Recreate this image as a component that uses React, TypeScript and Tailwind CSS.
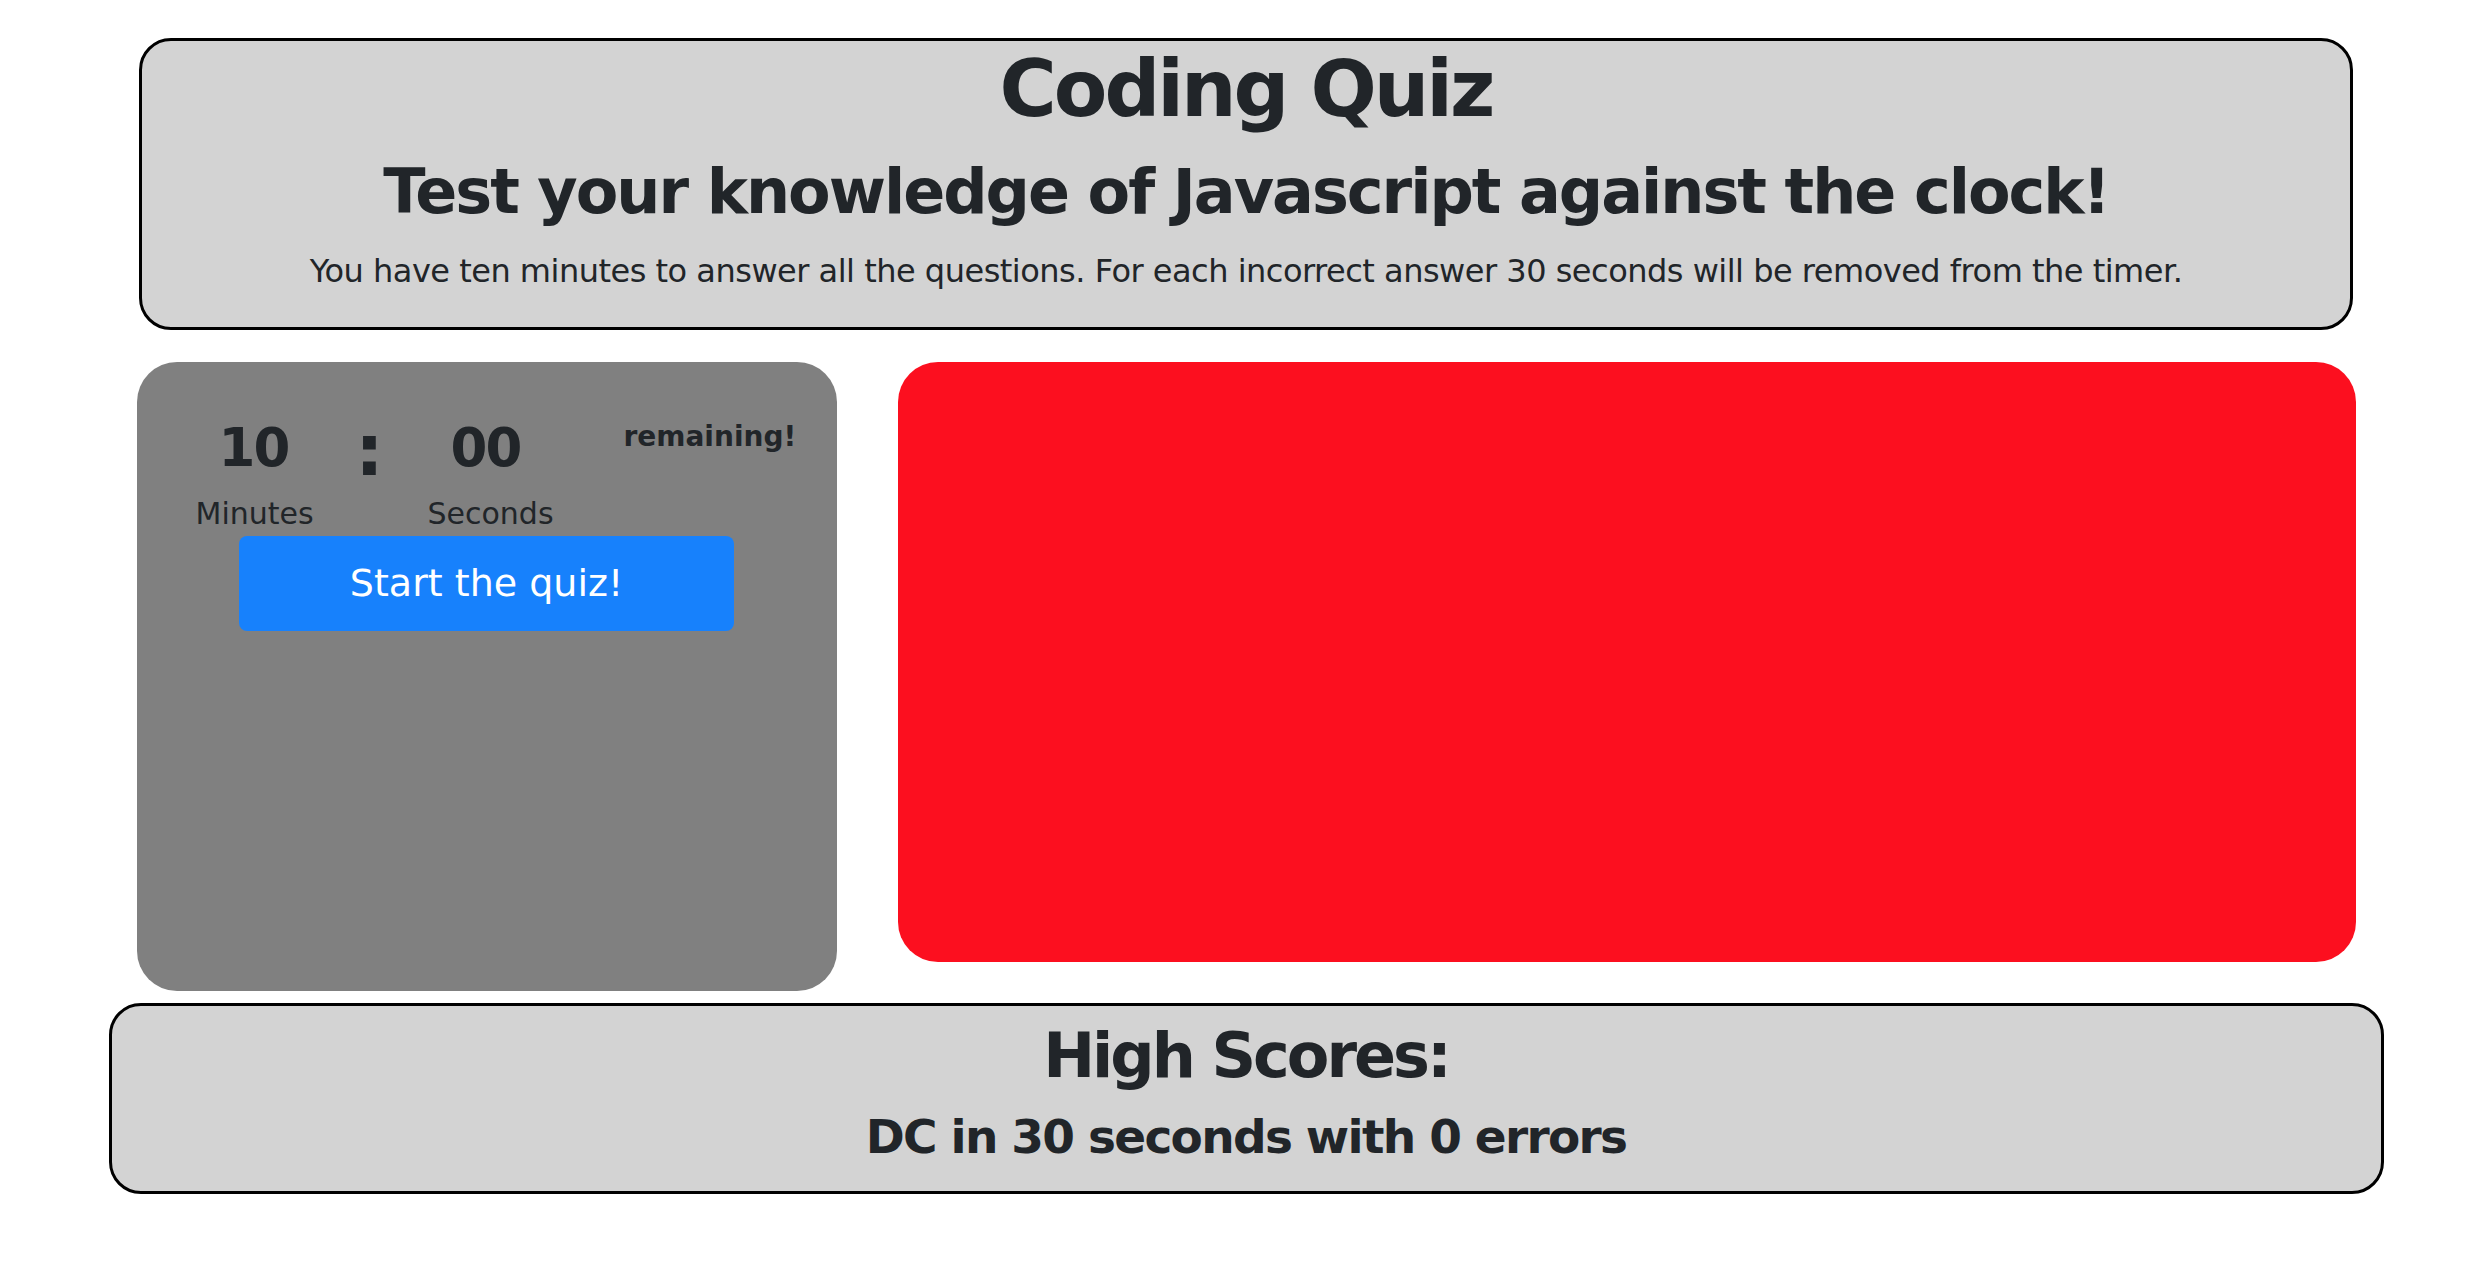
export default function App() {
  return (
    <div className="min-h-screen bg-white pt-[38px] font-['DejaVu_Sans',sans-serif] text-[#212529]">
      <header className="mx-auto w-[2214px] rounded-[32px] border-[3px] border-black bg-[#d3d3d3] pt-[1px] text-center">
        <h1 className="mb-[16px] text-[78px] font-bold leading-[1.23] tracking-[-3px]">Coding Quiz</h1>
        <h2 className="mb-[16px] text-[62px] font-bold leading-[1.24] tracking-[-2px]">
          Test your knowledge of Javascript against the clock!
        </h2>
        <p className="mb-[32px] text-[32px] leading-[1.5] tracking-[-0.5px]">
          You have ten minutes to answer all the questions. For each incorrect answer 30 seconds will be removed from the timer.
        </p>
      </header>

      <main className="mx-auto mt-[32px] flex w-[2219px] items-start justify-between">
        <section className="h-[629px] w-[700px] rounded-[40px] bg-[#808080] pt-[52px]">
          <div className="flex items-start pl-[59px]">
            <div className="w-[116px] text-center">
              <div className="text-[53px] font-bold leading-[1.27] tracking-[-2px]">10</div>
              <div className="mt-[10px] text-[30px] leading-[1.5]">Minutes</div>
            </div>
            <div className="-mt-[7px] w-[116px] text-center text-[72px] font-bold leading-[1.2]">:</div>
            <div className="w-[116px] text-center">
              <div className="text-[53px] font-bold leading-[1.27] tracking-[-2px]">00</div>
              <div className="mt-[10px] text-[30px] leading-[1.5]">Seconds</div>
            </div>
            <div className="ml-[80px] mt-[6px] text-[28px] font-bold leading-[1.2]">remaining!</div>
          </div>
          <button
            type="button"
            className="mx-auto block h-[95px] w-[495px] rounded-[8px] bg-[#1781fc] text-[38px] text-white"
          >
            Start the quiz!
          </button>
        </section>
        <section className="h-[600px] w-[1458px] rounded-[40px] bg-[#fc0f1f]" />
      </main>

      <footer className="mx-auto mt-[12px] w-[2275px] rounded-[32px] border-[3px] border-black bg-[#d3d3d3] pb-[26px] pt-[12px] text-center">
        <h2 className="mb-[13px] text-[62px] font-bold leading-[1.24] tracking-[-3px]">High Scores:</h2>
        <h4 className="text-[47px] font-bold leading-[1.23] tracking-[-1.7px]">DC in 30 seconds with 0 errors</h4>
      </footer>
    </div>
  );
}
